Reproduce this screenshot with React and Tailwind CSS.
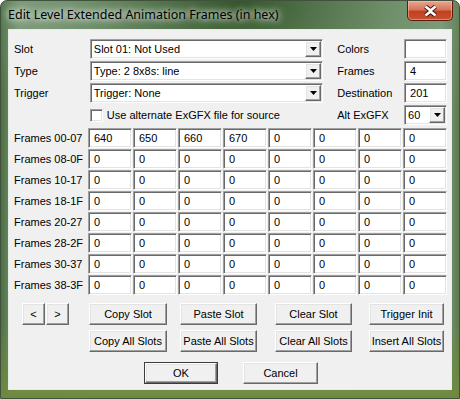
import React from 'react';

const sunken =
  'border border-t-[#a0a0a0] border-l-[#a0a0a0] border-r-white border-b-white shadow-[inset_1px_1px_0_#696969,inset_-1px_-1px_0_#e3e3e3] bg-white';
const raised =
  'border border-t-white border-l-white border-r-[#696969] border-b-[#696969] shadow-[inset_-1px_-1px_0_#a0a0a0,inset_1px_1px_0_#e3e3e3] bg-[#f0f0f0]';

const rows = ['00-07', '08-0F', '10-17', '18-1F', '20-27', '28-2F', '30-37', '38-3F'];
const firstRow = ['640', '650', '660', '670', '0', '0', '0', '0'];

function Arrow() {
  return (
    <svg width="7" height="4" viewBox="0 0 7 4">
      <path d="M0 0h7L3.5 4z" fill="#000" />
    </svg>
  );
}

function Combo({ value, width }) {
  return (
    <div className={`${sunken} flex items-center h-[20px] ${width}`}>
      <span className="flex-1 pl-[3px] truncate">{value}</span>
      <div className={`${raised} w-[16px] h-[16px] mr-[1px] flex items-center justify-center`}>
        <Arrow />
      </div>
    </div>
  );
}

function Box({ value, w = 'w-[43px]', pl = 'pl-[5px]' }) {
  return <div className={`${sunken} ${w} h-[20px] flex items-center ${pl}`}>{value}</div>;
}

function Btn({ children, w, h = 'h-[22px]', className = '' }) {
  return (
    <button className={`${raised} ${w} ${h} flex items-center justify-center ${className}`}>
      {children}
    </button>
  );
}

export default function App() {
  return (
    <div className="w-[460px] h-[399px] flex flex-col rounded-t-[7px] border border-[#40523c] bg-[radial-gradient(ellipse_60%_45%_at_52%_0%,#34562b_0%,#6f8f6a_55%,transparent_100%),linear-gradient(180deg,transparent_80%,#6f8a3e_100%),linear-gradient(90deg,#4d6e43_0%,#88a487_4%,#95ad95_50%,#8fa88d_96%,#5b7a4f_100%)] font-['Liberation_Sans',Arial,sans-serif] text-[11px] text-black overflow-hidden">
      {/* Title bar */}
      <div className="h-[28px] flex items-start justify-between">
        <span className="pl-[7px] pt-[5px] text-[12.5px] font-['Noto_Sans',sans-serif] text-black [text-shadow:0_0_6px_#fff,0_0_10px_#fff]">
          Edit Level Extended Animation Frames (in hex)
        </span>
        <div className="mr-[6px] w-[46px] h-[20px] rounded-b-[5px] border border-t-0 border-[#5a1c0e] bg-[linear-gradient(180deg,#e9a692_0%,#d7755c_45%,#c2401f_55%,#c8512f_100%)] shadow-[inset_0_0_0_1px_rgba(255,200,180,0.5)] flex items-center justify-center">
          <svg width="15" height="12" viewBox="0 0 15 12">
            <path d="M2.5 1.5l5 4 5-4M2.5 10.5l5-4 5 4" stroke="#3a1208" strokeWidth="4.4" fill="none" />
            <path d="M2.5 1.5l5 4 5-4M2.5 10.5l5-4 5 4" stroke="#fff" strokeWidth="2.6" fill="none" />
          </svg>
        </div>
      </div>

      {/* Client area */}
      <div className="flex-1 mx-[7px] mb-[8px] border border-[#e6ece6] bg-[#f0f0f0] flex flex-col pl-[5px] pr-[4px] pt-[8px]">
        {/* Top fields */}
        <div className="flex items-center h-[22px]">
          <span className="w-[76px]">Slot</span>
          <Combo value="Slot 01: Not Used" width="w-[234px]" />
          <span className="w-[67px] ml-[14px]">Colors</span>
          <Box value="" />
        </div>
        <div className="flex items-center h-[22px]">
          <span className="w-[76px]">Type</span>
          <Combo value="Type: 2 8x8s: line" width="w-[234px]" />
          <span className="w-[67px] ml-[14px]">Frames</span>
          <Box value="4" />
        </div>
        <div className="flex items-center h-[22px]">
          <span className="w-[76px]">Trigger</span>
          <Combo value="Trigger: None" width="w-[234px]" />
          <span className="w-[67px] ml-[14px]">Destination</span>
          <Box value="201" />
        </div>
        <div className="flex items-center h-[22px]">
          <span className="w-[76px]" />
          <div className="w-[234px] flex items-center">
            <div className={`${sunken} w-[13px] h-[13px]`} />
            <span className="ml-[4px]">Use alternate ExGFX file for source</span>
          </div>
          <span className="w-[67px] ml-[14px]">Alt ExGFX</span>
          <Combo value="60" width="w-[43px]" />
        </div>

        {/* Frames grid */}
        <div className="mt-[2px] flex flex-col gap-[1px]">
          {rows.map((r, i) => (
            <div key={r} className="flex items-center h-[20px]">
              <span className="w-[76px]">Frames {r}</span>
              <div className="flex gap-[1px]">
                {(i === 0 ? firstRow : Array(8).fill('0')).map((v, j) => (
                  <Box key={j} value={v} w="w-[44px]" />
                ))}
              </div>
            </div>
          ))}
        </div>

        {/* Buttons */}
        <div className="mt-[8px] flex items-center">
          <div className="w-[75px] flex pl-[8px] gap-[1px]">
            <Btn w="w-[23px]">&lt;</Btn>
            <Btn w="w-[23px]">&gt;</Btn>
          </div>
          <Btn w="w-[78px]">Copy Slot</Btn>
          <Btn w="w-[77px]" className="ml-[13px]">Paste Slot</Btn>
          <Btn w="w-[77px]" className="ml-[18px]">Clear Slot</Btn>
          <Btn w="w-[75px]" className="ml-[17px]">Trigger Init</Btn>
        </div>
        <div className="mt-[5px] flex items-center">
          <div className="w-[75px]" />
          <Btn w="w-[78px]">Copy All Slots</Btn>
          <Btn w="w-[77px]" className="ml-[13px]">Paste All Slots</Btn>
          <Btn w="w-[77px]" className="ml-[18px]">Clear All Slots</Btn>
          <Btn w="w-[75px]" className="ml-[17px]">Insert All Slots</Btn>
        </div>
        <div className="mt-[10px] flex items-center pl-[130px] gap-[25px]">
          <div className="border border-[#3c3c3c]">
            <Btn w="w-[72px]" h="h-[20px]">OK</Btn>
          </div>
          <Btn w="w-[75px]">Cancel</Btn>
        </div>
      </div>
    </div>
  );
}
